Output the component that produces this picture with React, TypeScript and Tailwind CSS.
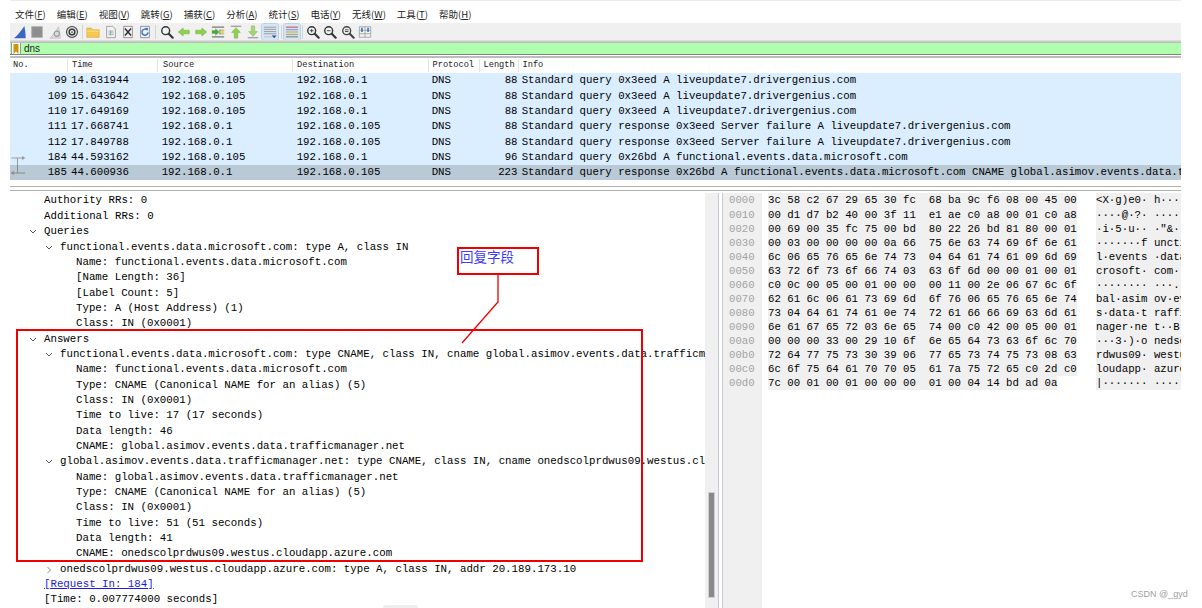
import React from "react";

const menus: [string, string][] = [["文件", "F"], ["编辑", "E"], ["视图", "V"], ["跳转", "G"], ["捕获", "C"], ["分析", "A"], ["统计", "S"], ["电话", "Y"], ["无线", "W"], ["工具", "T"], ["帮助", "H"]];

const Mag = ({ mark, dark = "#333" }: { mark?: "plus" | "minus" | "eq"; dark?: string }) => (
  <svg width="16" height="16" viewBox="0 0 16 16">
    <circle cx="6.5" cy="6.5" r="4.5" fill="#eef3f6" stroke={dark} strokeWidth="1.6" />
    <path d="M10 10l4.5 4.5" stroke={dark} strokeWidth="2.4" strokeLinecap="round" />
    {mark === "plus" && <path d="M4.5 6.5h4M6.5 4.5v4" stroke="#333" strokeWidth="1" />}
    {mark === "minus" && <path d="M4.5 6.5h4" stroke="#333" strokeWidth="1" />}
    {mark === "eq" && <path d="M4.5 5.5h4M4.5 7.5h4" stroke="#333" strokeWidth="1" />}
  </svg>
);

const Arrow = ({ dir }: { dir: "left" | "right" }) => (
  <svg width="16" height="16" viewBox="0 0 16 16">
    <path d={dir === "left" ? "M1.5 8L7 3.5V6h7v4H7v2.500z" : "M14.500 8L9 3.5V6H2v4h7v2.500z"} fill="#8fd04e" stroke="#74b53a" strokeWidth=".7" />
  </svg>
);

const icons: React.ReactNode[][] = [
  [
    <svg width="16" height="16" viewBox="0 0 16 16"><path d="M1 15C5 12 9 7 13 1c1 5 1.500 10 1.500 14z" fill="#3b66c4" /></svg>,
    <svg width="16" height="16" viewBox="0 0 16 16"><rect x="2" y="2" width="12" height="12" fill="#8e8e8e" stroke="#a8a8a8" /></svg>,
    <svg width="16" height="16" viewBox="0 0 16 16"><path d="M2 15C6 12 9 7 12 2c1 4 2 9 2 13z" fill="#dcdcdc" stroke="#c4c4c4" /><circle cx="10" cy="10" r="3" fill="none" stroke="#999" strokeWidth="1.200" /></svg>,
    <svg width="16" height="16" viewBox="0 0 16 16"><circle cx="8" cy="8" r="6.300" fill="#d9d9d9" stroke="#444" strokeWidth="1.200" /><circle cx="8" cy="8" r="3.200" fill="#fff" stroke="#333" strokeWidth="1.600" /><circle cx="8" cy="8" r="1" fill="#333" /></svg>,
  ],
  [
    <svg width="16" height="16" viewBox="0 0 16 16"><path d="M1 3.500h5l1.500 2H15V14H1z" fill="#f6c850" stroke="#e0a830" strokeWidth=".8" /><path d="M1 7h14" stroke="#fbe08e" /></svg>,
    <svg width="16" height="16" viewBox="0 0 16 16"><path d="M3 1.500h7l3 3v10H3z" fill="#f3f3ea" stroke="#9a9a9a" /><path d="M5 7h6M5 9h6M5 11h6M7.500 6v6" stroke="#7fa0b8" strokeWidth=".8" /></svg>,
    <svg width="16" height="16" viewBox="0 0 16 16"><path d="M3 1.500h10v13H3z" fill="#f2f2f2" stroke="#8a8a8a" /><path d="M4.500 4l7 8M11.500 4l-7 8" stroke="#333" strokeWidth="1.800" /></svg>,
    <svg width="16" height="16" viewBox="0 0 16 16"><path d="M3 1.500h10v13H3z" fill="#eef2f6" stroke="#8a8a8a" /><path d="M11.500 8.500a3.500 3.500 0 1 1-1.200-3" fill="none" stroke="#3670c0" strokeWidth="1.600" /><path d="M8.500 3l3 .5-.5 3z" fill="#3670c0" /></svg>,
  ],
  [
    <Mag />,
    <Arrow dir="left" />,
    <Arrow dir="right" />,
    <svg width="16" height="16" viewBox="0 0 16 16"><path d="M1 2.500h14M1 13.500h14M9 6h6M9 8h6M9 10h6" stroke="#777" strokeWidth="1.300" /><path d="M1 6h4V3.800L9.500 8 5 12.200V10H1z" fill="#4fa83a" /><path d="M11 6h4v4h-4z" fill="#e6d96a" /></svg>,
    <svg width="16" height="16" viewBox="0 0 16 16"><path d="M2 1.500h12" stroke="#999" strokeWidth="1.400" /><path d="M8 3l5 5.500h-3V15H6V8.500H3z" fill="#8fd04e" stroke="#74b53a" strokeWidth=".6" /></svg>,
    <svg width="16" height="16" viewBox="0 0 16 16"><path d="M2 14.500h12" stroke="#999" strokeWidth="1.400" /><path d="M8 13L3 7.500h3V1h4v6.500h3z" fill="#a6d27a" stroke="#8ab862" strokeWidth=".6" /></svg>,
    <svg width="16" height="16" viewBox="0 0 16 16"><path d="M1 2.500h14M1 5h14M1 7.500h14M1 10h14" stroke="#9a9a9a" strokeWidth="1.100" /><path d="M1 13.500h9" stroke="#bbb" /><path d="M10 12h5.500l-2.700 3z" fill="#24509a" /></svg>,
  ],
  [
    <svg width="16" height="16" viewBox="0 0 16 16"><path d="M1 2.500h14" stroke="#e06060" strokeWidth="1.400" /><path d="M1 5.300h14" stroke="#7ba6d8" strokeWidth="1.400" /><path d="M1 8h14" stroke="#d9a858" strokeWidth="1.400" /><path d="M1 10.800h14" stroke="#a0b070" strokeWidth="1.400" /><path d="M1 13.500h14" stroke="#8b8b8b" strokeWidth="1.400" /></svg>,
  ],
  [
    <Mag mark="plus" />,
    <Mag mark="minus" />,
    <Mag mark="eq" dark="#444" />,
    <svg width="16" height="16" viewBox="0 0 16 16"><path d="M1.500 2h13v12h-13zM8 2v12M1.500 6h13M1.500 10h13" fill="#f2f2f2" stroke="#9a9a9a" strokeWidth=".9" /><path d="M4.500 3v5M11.500 3v5" stroke="#3670c0" strokeWidth="1.800" /></svg>,
  ],
];

const packets = [
  ["99", "14.631944", "192.168.0.105", "192.168.0.1", "DNS", "88", "Standard query 0x3eed A liveupdate7.drivergenius.com"],
  ["109", "15.643642", "192.168.0.105", "192.168.0.1", "DNS", "88", "Standard query 0x3eed A liveupdate7.drivergenius.com"],
  ["110", "17.649169", "192.168.0.105", "192.168.0.1", "DNS", "88", "Standard query 0x3eed A liveupdate7.drivergenius.com"],
  ["111", "17.668741", "192.168.0.1", "192.168.0.105", "DNS", "88", "Standard query response 0x3eed Server failure A liveupdate7.drivergenius.com"],
  ["112", "17.849788", "192.168.0.1", "192.168.0.105", "DNS", "88", "Standard query response 0x3eed Server failure A liveupdate7.drivergenius.com"],
  ["184", "44.593162", "192.168.0.105", "192.168.0.1", "DNS", "96", "Standard query 0x26bd A functional.events.data.microsoft.com"],
  ["185", "44.600936", "192.168.0.1", "192.168.0.105", "DNS", "223", "Standard query response 0x26bd A functional.events.data.microsoft.com CNAME global.asimov.events.data.trafficmanager.net"],
];

type Line = [number, "open" | "closed" | "none", string, boolean?];
const details: Line[] = [
  [44, "none", "Authority RRs: 0"],
  [44, "none", "Additional RRs: 0"],
  [44, "open", "Queries"],
  [60, "open", "functional.events.data.microsoft.com: type A, class IN"],
  [76, "none", "Name: functional.events.data.microsoft.com"],
  [76, "none", "[Name Length: 36]"],
  [76, "none", "[Label Count: 5]"],
  [76, "none", "Type: A (Host Address) (1)"],
  [76, "none", "Class: IN (0x0001)"],
  [44, "open", "Answers"],
  [60, "open", "functional.events.data.microsoft.com: type CNAME, class IN, cname global.asimov.events.data.trafficmanager.net"],
  [76, "none", "Name: functional.events.data.microsoft.com"],
  [76, "none", "Type: CNAME (Canonical NAME for an alias) (5)"],
  [76, "none", "Class: IN (0x0001)"],
  [76, "none", "Time to live: 17 (17 seconds)"],
  [76, "none", "Data length: 46"],
  [76, "none", "CNAME: global.asimov.events.data.trafficmanager.net"],
  [60, "open", "global.asimov.events.data.trafficmanager.net: type CNAME, class IN, cname onedscolprdwus09.westus.cloudapp.azure.com"],
  [76, "none", "Name: global.asimov.events.data.trafficmanager.net"],
  [76, "none", "Type: CNAME (Canonical NAME for an alias) (5)"],
  [76, "none", "Class: IN (0x0001)"],
  [76, "none", "Time to live: 51 (51 seconds)"],
  [76, "none", "Data length: 41"],
  [76, "none", "CNAME: onedscolprdwus09.westus.cloudapp.azure.com"],
  [60, "closed", "onedscolprdwus09.westus.cloudapp.azure.com: type A, class IN, addr 20.189.173.10"],
  [44, "none", "[Request In: 184]", true],
  [44, "none", "[Time: 0.007774000 seconds]"],
];

const hex = [
  "3c 58 c2 67 29 65 30 fc  68 ba 9c f6 08 00 45 00",
  "00 d1 d7 b2 40 00 3f 11  e1 ae c0 a8 00 01 c0 a8",
  "00 69 00 35 fc 75 00 bd  80 22 26 bd 81 80 00 01",
  "00 03 00 00 00 00 0a 66  75 6e 63 74 69 6f 6e 61",
  "6c 06 65 76 65 6e 74 73  04 64 61 74 61 09 6d 69",
  "63 72 6f 73 6f 66 74 03  63 6f 6d 00 00 01 00 01",
  "c0 0c 00 05 00 01 00 00  00 11 00 2e 06 67 6c 6f",
  "62 61 6c 06 61 73 69 6d  6f 76 06 65 76 65 6e 74",
  "73 04 64 61 74 61 0e 74  72 61 66 66 69 63 6d 61",
  "6e 61 67 65 72 03 6e 65  74 00 c0 42 00 05 00 01",
  "00 00 00 33 00 29 10 6f  6e 65 64 73 63 6f 6c 70",
  "72 64 77 75 73 30 39 06  77 65 73 74 75 73 08 63",
  "6c 6f 75 64 61 70 70 05  61 7a 75 72 65 c0 2d c0",
  "7c 00 01 00 01 00 00 00  01 00 04 14 bd ad 0a",
];

const toAscii = (line: string) =>
  line
    .split("  ")
    .map((g) =>
      g
        .split(" ")
        .map((b) => {
          const c = parseInt(b, 16);
          return c >= 32 && c < 127 ? String.fromCharCode(c) : "·";
        })
        .join("")
    )
    .join(" ");

const mono = "font-['Liberation_Mono','DejaVu_Sans_Mono',monospace] text-[10.72px] text-black";

export default function App() {
  return (
    <div className="relative w-[1202px] h-[608px] overflow-hidden bg-white">
      <div className="ml-[10px] mr-[21px] h-[608px] flex flex-col">
        {/* Menu */}
        <div className="h-[23px] shrink-0 flex items-start pt-[7px] pl-[5px] gap-[11px] border-t border-[#ececec] font-['Noto_Sans_CJK_SC','Noto_Sans',sans-serif] text-[9.5px] leading-[12px] text-[#222]">
          {menus.map(([n, k]) => (
            <span key={n} className="whitespace-pre">
              {n}(<span className="underline">{k}</span>)
            </span>
          ))}
        </div>
        {/* Toolbar */}
        <div className="h-[17px] shrink-0 bg-[#f0f0f0] flex items-center pl-[2px]">
          {icons.map((group, gi) => (
            <React.Fragment key={gi}>
              {gi > 0 && <div className="mx-[2.200px] w-px h-[14px] bg-[#d4d4d4]" />}
              <div className="flex gap-[1.3px]">
                {group.map((ic, i) => {
                  const active = (gi === 2 && i === 6) || gi === 3;
                  return (
                    <div key={i} className={`w-[16px] h-[16px] flex items-center justify-center rounded-[2px] [&>svg]:w-[14px] [&>svg]:h-[14px] ${active ? "bg-[#d5e6f5] outline outline-1 outline-[#b4d4ee]" : ""}`}>
                      {ic}
                    </div>
                  );
                })}
              </div>
            </React.Fragment>
          ))}
        </div>
        <div className="h-[3px] shrink-0 bg-gradient-to-b from-[#e4e4e4] to-[#b4b4b4]" />
        {/* Filter */}
        <div className="h-[11px] shrink-0 bg-[#afffaf] flex items-center">
          <div className="ml-[1px] w-[10px] h-[11px] bg-white flex items-center justify-center border-x border-[#999]">
            <svg width="6" height="10" viewBox="0 0 6 10"><path d="M0.500 0h5v10L3 7.500.5 10z" fill="#c8960f" /></svg>
          </div>
          <span className="ml-[3px] font-['Liberation_Sans',sans-serif] text-[10px] leading-[11px] text-[#222]">dns</span>
        </div>
        <div className="h-px shrink-0 bg-[#808080]" />
        <div className="h-px shrink-0 bg-white" />
        <div className="h-[2px] shrink-0 bg-[#bcbcbc]" />
        {/* Column header */}
        <div className="h-[15.400px] shrink-0 flex items-center font-['Liberation_Mono',monospace] text-[8.67px] text-[#222]">
          {[
            ["No.", "w-[58px] pl-[3px]"],
            ["Time", "w-[90px] pl-[4px]"],
            ["Source", "w-[135px] pl-[5px]"],
            ["Destination", "w-[136px] pl-[4px]"],
            ["Protocol", "w-[51px] pl-[3.500px]"],
            ["Length", "w-[39px] pl-[3.500px]"],
            ["Info", "flex-1 pl-[3.500px]"],
          ].map(([t, c], i) => (
            <div key={t} className={`${c} h-[13px] leading-[13px] ${i < 6 ? "border-r border-[#e4e4e4]" : ""}`}>{t}</div>
          ))}
        </div>
        {/* Packets */}
        <div className="shrink-0">
          {packets.map((p, i) => (
            <div key={p[0]} className={`h-[15.300px] flex items-center whitespace-pre overflow-hidden ${mono} leading-[15.300px] ${i === 6 ? "bg-[#b9c9d6]" : "bg-[#daeeff]"}`}>
              <div className="relative w-[58px] h-full text-right pr-[1px]">
                {i === 5 && (
                  <svg className="absolute left-0 top-0" width="16" height="16" viewBox="0 0 16 16">
                    <path d="M1.500 8H13M7.500 8V16" stroke="#9a9a9a" fill="none" />
                    <path d="M15.500 8l-3.500-2v4z" fill="#9a9a9a" />
                  </svg>
                )}
                {i === 6 && (
                  <svg className="absolute left-0 top-0" width="16" height="16" viewBox="0 0 16 16">
                    <path d="M7.500 0V8M3 8H15" stroke="#8a8a8a" fill="none" />
                    <path d="M0.500 8l3.500-2v4z" fill="#8a8a8a" />
                  </svg>
                )}
                {p[0]}
              </div>
              <div className="w-[90px] pl-[3px]">{p[1]}</div>
              <div className="w-[135px] pl-[3.700px]">{p[2]}</div>
              <div className="w-[136px] pl-[3.700px]">{p[3]}</div>
              <div className="w-[51px] pl-[2.700px]">{p[4]}</div>
              <div className="w-[39px] text-right pr-[1.500px]">{p[5]}</div>
              <div className="flex-1 pl-[2.700px] overflow-hidden">{p[6]}</div>
            </div>
          ))}
        </div>
        {/* Splitter */}
        <div className="h-[13px] shrink-0 pt-[6px]">
          <div className="h-[5px] border-y border-[#b0b0b0] bg-white" />
        </div>
        {/* Bottom panes */}
        <div className="flex-1 min-h-0 flex">
          {/* Details */}
          <div className="w-[695px] overflow-hidden">
            {details.map(([x, state, text, link], i) => (
              <div key={i} className={`relative h-[15.350px] leading-[15.350px] whitespace-pre ${mono} text-[10.75px]`} style={{ paddingLeft: x - 10 }}>
                {state !== "none" && (
                  <svg className="absolute top-[5px]" style={{ left: x - 10 - 15 }} width="8" height="6" viewBox="0 0 8 6">
                    {state === "open" ? (
                      <path d="M1 1l3 3 3-3" fill="none" stroke="#555" strokeWidth="1" />
                    ) : (
                      <path d="M2.500 0l3 3-3 3" fill="none" stroke="#888" strokeWidth="1" />
                    )}
                  </svg>
                )}
                {link ? <span className="text-[#1a1ae0] underline">{text}</span> : text}
              </div>
            ))}
          </div>
          {/* Scrollbar */}
          <div className="w-[13px] bg-[#f0f0f0] pt-[300px] pl-[4px]">
            <div className="w-[5px] h-[104px] bg-[#8a8a8a] outline outline-1 outline-[#d0d0d0]" />
          </div>
          {/* Vertical splitter */}
          <div className="w-[5px] border-x border-[#c2cad2] bg-white" />
          {/* Hex */}
          <div className="flex-1 min-w-0 overflow-hidden flex">
            <div className="w-[39px] h-full shrink-0 bg-[#f0f0f0]">
              {hex.map((_, i) => (
                <div key={i} className="h-[14.040px] leading-[14.040px] pl-[6px] font-['Liberation_Mono',monospace] text-[10.67px] text-[#a4a4a4]">
                  {(i * 16).toString(16).padStart(4, "0")}
                </div>
              ))}
            </div>
            <div className="pl-[6px] shrink-0 w-[334px]">
              {hex.map((h, i) => (
                <div key={i} className={`h-[14.040px] leading-[14.040px] whitespace-pre ${mono}`}>
                  <span className="inline-block h-[14.040px] bg-[#f0f0f0]">{h}</span>
                </div>
              ))}
            </div>
            <div className="flex-1 overflow-hidden">
              {hex.map((h, i) => (
                <div key={i} className={`h-[14.040px] leading-[14.040px] whitespace-pre bg-[#f0f0f0] ${mono}`}>
                  {toAscii(h)}
                </div>
              ))}
            </div>
          </div>
        </div>
      </div>

      {/* Annotations */}
      <div className="absolute left-[16px] top-[329px] w-[627px] h-[233px] border-2 border-[#f00000]" />
      <div className="absolute left-[457px] top-[247px] w-[82px] h-[28px] border-2 border-[#f00000] pl-[1px] font-['Noto_Sans_CJK_SC',sans-serif] text-[13.500px] leading-[15px] text-[#3c3cff]">回复字段</div>
      <svg className="absolute left-[455px] top-[272px]" width="50" height="75" viewBox="0 0 50 75">
        <path d="M43 3V30L7 71" fill="none" stroke="#f00000" strokeWidth="1.300" />
      </svg>
      <div className="absolute left-[1131px] top-[588px] font-['Liberation_Sans',sans-serif] text-[9px] leading-[13px] text-[#a0a0a0]">CSDN @_gyd</div>
      <div className="absolute left-[383px] top-[605px] w-[35px] h-[6px] rounded-[3px] bg-[#eeeeee]" />
    </div>
  );
}
